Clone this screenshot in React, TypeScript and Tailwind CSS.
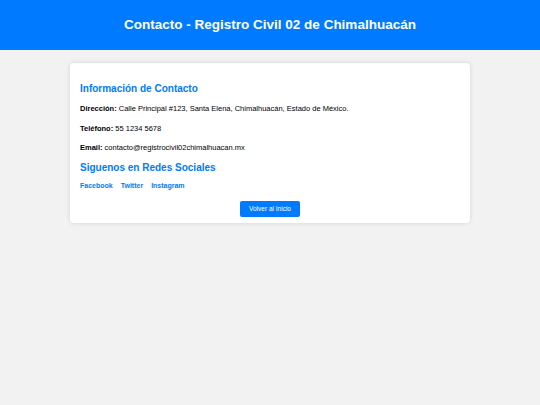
import React from 'react';

export default function App() {
  return (
    <div className="min-h-[405px] bg-[#f2f2f2] font-['Liberation_Sans',Arial,sans-serif] text-black">
      <header className="bg-[#007bff] h-[50px] flex items-center justify-center">
        <h1 className="text-white font-bold text-[13.5px] leading-none">Contacto - Registro Civil 02 de Chimalhuacán</h1>
      </header>
      <main className="pt-[13px] flex justify-center">
        <div className="w-[400px] bg-white rounded-[4px] shadow-[0_0_5px_rgba(0,0,0,0.12)] px-[10px] pt-[20px] pb-[6px]">
          <h2 className="text-[#007bff] font-bold text-[10px] leading-[12px]">Información de Contacto</h2>
          <p className="mt-[9px] text-[7.5px] leading-[10px]"><strong>Dirección:</strong> Calle Principal #123, Santa Elena, Chimalhuacán, Estado de México.</p>
          <p className="mt-[10px] text-[7.5px] leading-[10px]"><strong>Teléfono:</strong> 55 1234 5678</p>
          <p className="mt-[9px] text-[7.5px] leading-[10px]"><strong>Email:</strong> contacto@registrocivil02chimalhuacan.mx</p>
          <h2 className="mt-[9px] text-[#007bff] font-bold text-[10px] leading-[12px]">Siguenos en Redes Sociales</h2>
          <div className="mt-[7px] flex gap-[8px] text-[7px] leading-[10px] font-bold text-[#007bff]">
            <a href="#">Facebook</a>
            <a href="#">Twitter</a>
            <a href="#">Instagram</a>
          </div>
          <div className="mt-[10px] flex justify-center">
            <a href="#" className="bg-[#007bff] text-white text-[6.5px] rounded-[2px] w-[60px] h-[16px] flex items-center justify-center">Volver al Inicio</a>
          </div>
        </div>
      </main>
    </div>
  );
}
